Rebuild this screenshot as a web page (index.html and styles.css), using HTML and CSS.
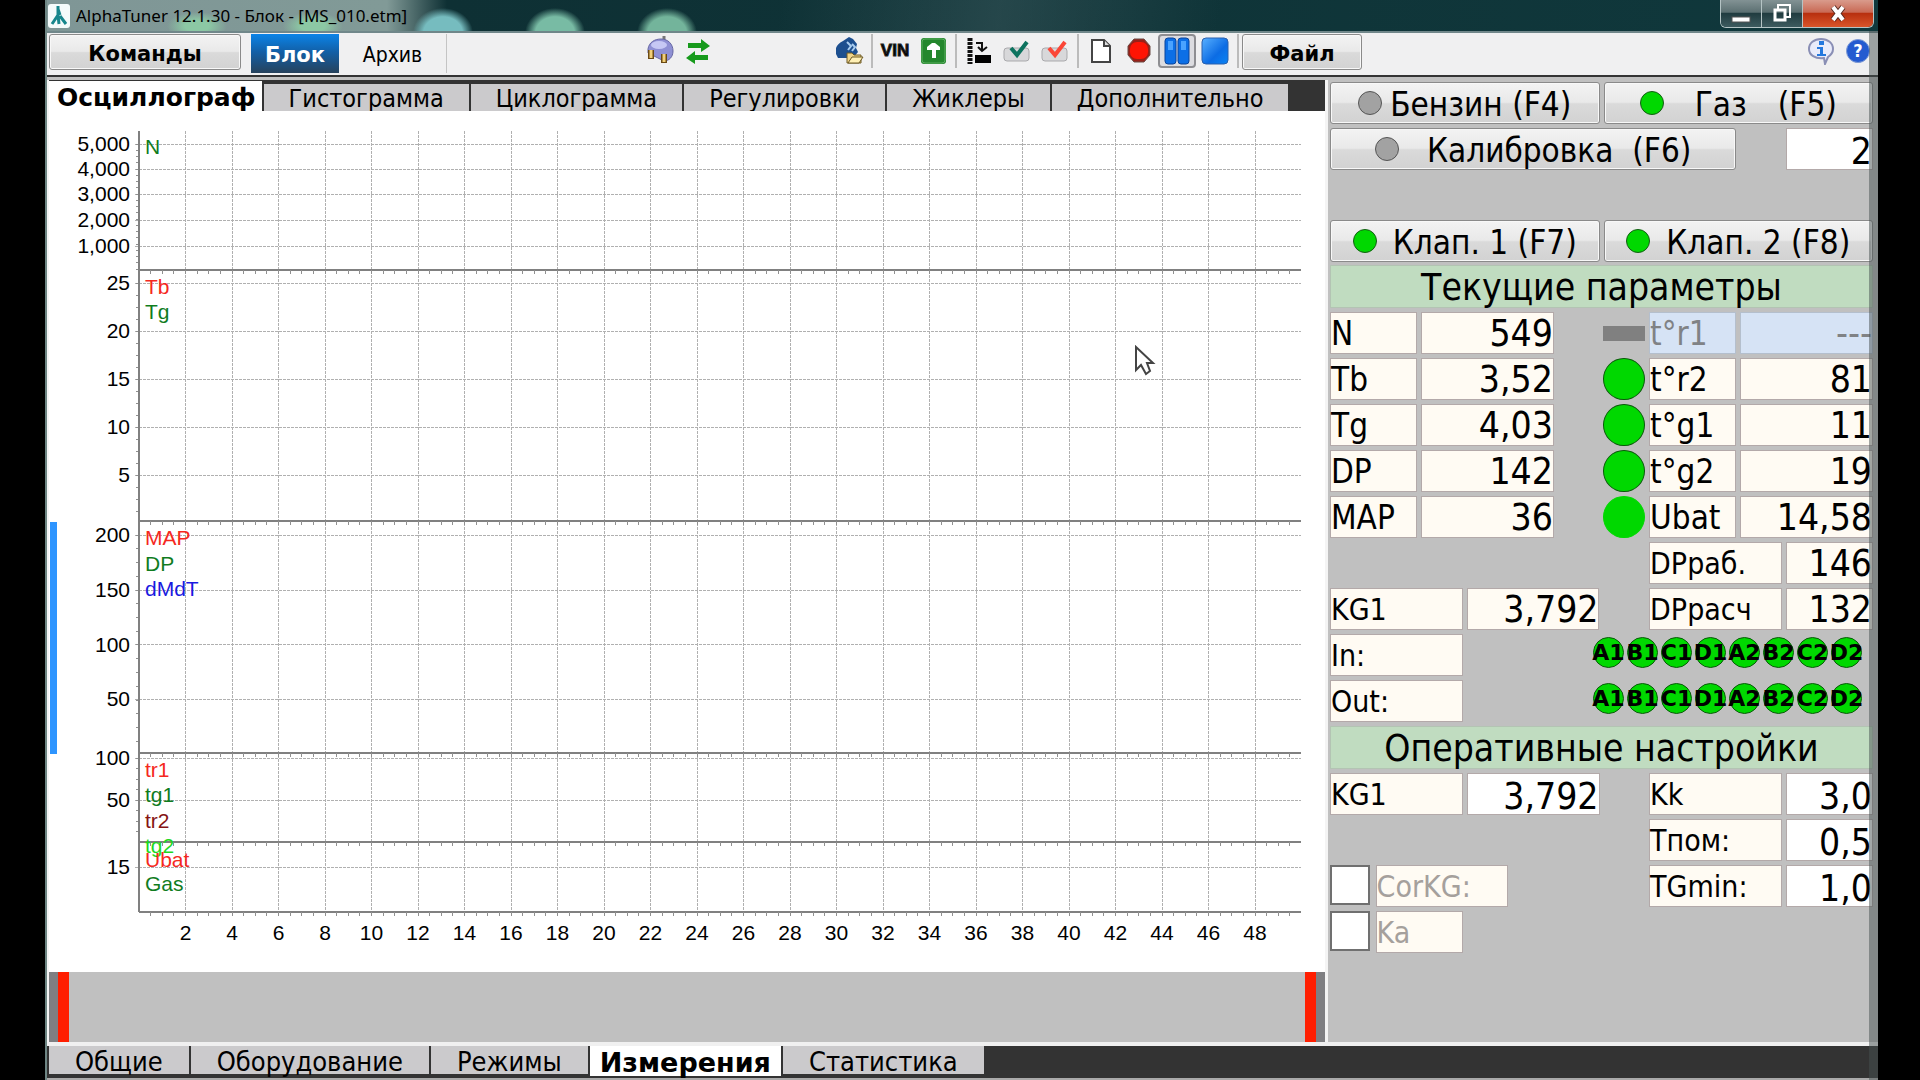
FILE: index.html
```html
<!DOCTYPE html>
<html lang="ru">
<head>
  <meta charset="UTF-8">
  <meta name="viewport" content="width=device-width, initial-scale=1">
  <title>AlphaTuner 12.1.30 - Блок - [MS_010.etm]</title>
  <link rel="stylesheet" href="styles.css">
</head>
<body>
  <div class="window">

    <header class="titlebar">
      <svg class="app-icon" width="22" height="24" viewBox="0 0 22 24">
        <rect width="22" height="24" rx="3" fill="#f4fbfb"/>
        <path d="M10 2v9l-6 9M10 5l2 6M10 11l1 9M12 12l6 8" fill="none" stroke="#16868c" stroke-width="3"/>
      </svg>
      <span class="title">AlphaTuner 12.1.30 - Блок - [MS_010.etm]</span>
      <div class="window-controls">
        <button class="minimize" aria-label="Свернуть">
          <svg width="20" height="22" viewBox="0 0 20 22"><rect x="1" y="14" width="18" height="5" fill="#fff" stroke="#555"/></svg>
        </button>
        <button class="restore" aria-label="Восстановить">
          <svg width="20" height="22" viewBox="0 0 20 22"><path d="M6 6V2h12v12h-4" fill="none" stroke="#fff" stroke-width="2"/><rect x="3" y="7" width="10" height="10" fill="none" stroke="#fff" stroke-width="3"/></svg>
        </button>
        <button class="close" aria-label="Закрыть">
          <svg width="18" height="18" viewBox="0 0 18 18"><path d="M4 2l10 13M14 2L4 15" stroke="#5a2a20" stroke-width="6"/><path d="M4 2l10 13M14 2L4 15" stroke="#fff" stroke-width="4"/></svg>
        </button>
      </div>
    </header>

    <nav class="toolbar">
      <button class="btn commands">Команды</button>
      <button class="mode active">Блок</button>
      <button class="mode">Архив</button>

      <div class="icons connection">
        <button aria-label="Подключение">
          <svg width="28" height="30" viewBox="0 0 28 30"><path d="M18 0v6" stroke="#777" stroke-width="3"/><path d="M2 13C3 6 9 3 15 3c7 0 12 5 12 12 0 6-4 10-9 10L2 17z" fill="#8f90d4" stroke="#6667a4"/><ellipse cx="13" cy="9" rx="8" ry="4" fill="#c6c8f4"/><path d="M5 14v9M18 18v9" stroke="#6b4a14" stroke-width="6"/><path d="M5 14v8M18 18v8" stroke="#f2cf78" stroke-width="3"/></svg>
        </button>
        <button aria-label="Обмен">
          <svg width="26" height="26" viewBox="0 0 26 26"><path d="M3 5h13V1l9 7-9 6v-4H3z" fill="#179a1c"/><path d="M23 17H10v-4l-9 7 9 6v-4h13z" fill="#179a1c"/></svg>
        </button>
      </div>

      <div class="icons">
        <button aria-label="Открыть профиль">
          <svg width="30" height="30" viewBox="0 0 30 30"><path d="M9 5L15 1l4 2 4 5-1 4 2 4-5 6H4l-2-4v-6c1-3 3-5 7-7z" fill="#1d4f8f"/><path d="M13 6l4 4-3 4M18 8l3 3-3 4" fill="none" stroke="#a9cdf0" stroke-width="2"/><path d="M13 27V17h5l2 2h7v8z" fill="#f0d58a" stroke="#6e5a25"/><path d="M14 27l4-6h11l-4 6z" fill="#fff0b5" stroke="#6e5a25"/></svg>
        </button>
        <span class="separator"></span>
        <button class="vin">VIN</button>
        <button aria-label="Запись в блок">
          <svg width="25" height="26" viewBox="0 0 25 26"><rect width="25" height="26" rx="3" fill="#24872d"/><rect x="1" y="1" width="23" height="24" rx="3" fill="none" stroke="#5cae61"/><path d="M6 9l5-4h3l5 4v3h-4v8h-4v-8H6z" fill="#fff"/></svg>
        </button>
        <span class="separator"></span>
        <button aria-label="Память">
          <svg width="24" height="26" viewBox="0 0 24 26"><path d="M3 0v26" stroke="#111" stroke-width="5" stroke-dasharray="3 1"/><path d="M9 5h6v7M11 9l4 4 5-4" fill="none" stroke="#111" stroke-width="2"/><rect x="8" y="17" width="16" height="8" fill="#000"/></svg>
        </button>
        <button aria-label="Проверить">
          <svg width="28" height="24" viewBox="0 0 28 24"><rect x="1" y="9" width="25" height="13" rx="3" fill="#d8d8da" stroke="#a9a9ac"/><path d="M8 9l6 7L24 3" fill="none" stroke="#0d735f" stroke-width="4"/></svg>
        </button>
        <button aria-label="Сбросить ошибки">
          <svg width="28" height="24" viewBox="0 0 28 24"><rect x="1" y="9" width="25" height="13" rx="3" fill="#d8d8da" stroke="#a9a9ac"/><path d="M8 9l6 7L24 3" fill="none" stroke="#fb4637" stroke-width="4"/></svg>
        </button>
        <span class="separator"></span>
        <button aria-label="Новый">
          <svg width="20" height="24" viewBox="0 0 20 24"><path d="M1 1h12l6 6v16H1z" fill="#fff" stroke="#444" stroke-width="2"/><path d="M13 1v6h6" fill="#ddd" stroke="#444" stroke-width="2"/></svg>
        </button>
        <button aria-label="Запись">
          <svg width="26" height="26" viewBox="0 0 26 26"><path d="M8 1h10l6 7v9l-6 7H8l-6-7V8z" fill="#9a2018" stroke="#6b4a44" stroke-width="1"/><rect x="4" y="4" width="18" height="17" rx="7" fill="#ff1404"/></svg>
        </button>
        <button class="pressed" aria-label="Пауза">
          <svg width="26" height="28" viewBox="0 0 26 28"><rect x="1" y="1" width="11" height="26" rx="3" fill="#0c6fe6" stroke="#0a459b"/><rect x="14" y="1" width="11" height="26" rx="3" fill="#0c6fe6" stroke="#0a459b"/><path d="M4 4h5v9H4zM17 4h5v9h-5z" fill="#4aa3ff"/></svg>
        </button>
        <button aria-label="Стоп">
          <svg width="28" height="28" viewBox="0 0 28 28">
            <defs><linearGradient id="stop-fill" x2="1" y2="1"><stop offset="0" stop-color="#58b0ff"/><stop offset="0.6" stop-color="#0c6ce4"/><stop offset="1" stop-color="#0a84f4"/></linearGradient></defs>
            <rect x="1" y="1" width="26" height="26" rx="4" fill="url(#stop-fill)" stroke="#2a60ad"/>
          </svg>
        </button>
        <span class="separator"></span>
      </div>
      <button class="btn file">Файл</button>

      <div class="help">
        <button aria-label="О программе">
          <svg width="26" height="27" viewBox="0 0 26 27"><path d="M13 1c7 0 12 4 12 10 0 4-2 6-5 8l-3 7-1-6C7 21 1 17 1 11S6 1 13 1z" fill="#e9ebfa" stroke="#8a8fb5" stroke-width="2"/><rect x="11" y="3" width="5" height="4" fill="#2478de"/><path d="M9 9h6v7h3v2H9v-2h3v-5H9z" fill="#2478de"/></svg>
        </button>
        <button class="question" aria-label="Справка">?</button>
      </div>
    </nav>

    <div class="workspace">
      <main class="scope">
        <nav class="tabs top-tabs">
          <button class="active">Осциллограф</button>
          <button>Гистограмма</button>
          <button>Циклограмма</button>
          <button>Регулировки</button>
          <button>Жиклеры</button>
          <button>Дополнительно</button>
        </nav>
        <div class="chart-area">
          <svg id="chart"></svg>
          <svg class="cursor" width="22" height="32" viewBox="0 0 22 32"><path d="M2 2v23l5-5 5 9 4-3-3-8h6z" fill="#fff" stroke="#444" stroke-width="2"/></svg>
        </div>
        <div class="timeline">
          <button class="handle" aria-label="Начало"></button>
          <button class="handle" aria-label="Конец"></button>
        </div>
      </main>

      <aside class="panel">
        <div class="grid">
          <button class="btn w6"><i class="lamp off"></i>Бензин (F4)</button>
          <button class="btn w6 wide-text"><i class="lamp"></i><span>Газ</span><span>(F5)</span></button>
        </div>
        <div class="grid">
          <button class="btn w9 spaced"><i class="lamp off"></i><span>Калибровка&nbsp; (F6)</span></button>
          <input class="field w2 last" aria-label="Калибровка" value="2">
        </div>
        <div class="grid valves">
          <button class="btn w6 even"><i class="lamp"></i>Клап. 1 (F7)</button>
          <button class="btn w6 even"><i class="lamp"></i>Клап. 2 (F8)</button>
        </div>

        <h2>Текущие параметры</h2>
        <div class="grid">
          <span class="name w2">N</span><output class="value w3">549</output>
          <i class="dash"></i><span class="name w2 disabled">t°r1</span><output class="value w3 disabled">---</output>

          <span class="name w2">Tb</span><output class="value w3">3,52</output>
          <i class="dot"></i><span class="name w2">t°r2</span><output class="value w3">81</output>

          <span class="name w2">Tg</span><output class="value w3">4,03</output>
          <i class="dot"></i><span class="name w2">t°g1</span><output class="value w3">11</output>

          <span class="name w2">DP</span><output class="value w3">142</output>
          <i class="dot"></i><span class="name w2">t°g2</span><output class="value w3">19</output>

          <span class="name w2">MAP</span><output class="value w3">36</output>
          <i class="dot plain"></i><span class="name w2">Ubat</span><output class="value w3">14,58</output>

          <span class="name w3 right">DPраб.</span><output class="value w2">146</output>

          <span class="name w3">KG1</span><output class="value w3">3,792</output>
          <span class="name w3 right">DPрасч</span><output class="value w2">132</output>

          <span class="name w3">In:</span>
          <div class="leds"><b>A1</b><b>B1</b><b>C1</b><b>D1</b><b>A2</b><b>B2</b><b>C2</b><b>D2</b></div>

          <span class="name w3">Out:</span>
          <div class="leds"><b>A1</b><b>B1</b><b>C1</b><b>D1</b><b>A2</b><b>B2</b><b>C2</b><b>D2</b></div>
        </div>

        <h2>Оперативные настройки</h2>
        <div class="grid">
          <label class="name w3" for="kg1">KG1</label><input class="field w3" id="kg1" value="3,792">
          <label class="name w3 right" for="kk">Kk</label><input class="field w2" id="kk" value="3,0">

          <label class="name w3 right" for="tpom">Tпом:</label><input class="field w2" id="tpom" value="0,5">

          <input type="checkbox" id="corkg"><label class="name w3 muted" for="corkg">CorKG:</label>
          <label class="name w3 right" for="tgmin">TGmin:</label><input class="field w2" id="tgmin" value="1,0">

          <input type="checkbox" id="ka"><label class="name w2 muted" for="ka">Ka</label>
        </div>
      </aside>
    </div>

    <nav class="tabs bottom-tabs">
      <button>Общие</button>
      <button>Оборудование</button>
      <button>Режимы</button>
      <button class="active">Измерения</button>
      <button>Статистика</button>
    </nav>

    <div class="frame-edge"></div>
  </div>

  <script>
    // Size of the plot in chart units, everything is placed as a share of it
    const W = 1162;
    const H = 781;
    const STEP = 93 / 2; // one labelled column, 2 seconds

    // top and bottom of each band, its gridlines, and its traces
    const bands = [
      { top: 0, bottom: 139, lines: [['5,000', 13], ['4,000', 38], ['3,000', 63], ['2,000', 89], ['1,000', 115]],
        traces: [['N', 'green', 23]] },
      { top: 139, bottom: 390, lines: [['25', 152], ['20', 200], ['15', 248], ['10', 296], ['5', 344]],
        traces: [['Tb', 'red', 163], ['Tg', 'green', 188]] },
      { top: 390, bottom: 622, lines: [['200', 404], ['150', 459], ['100', 514], ['50', 568]],
        traces: [['MAP', 'red', 414], ['DP', 'green', 440], ['dMdT', 'blue', 465]], selected: true },
      { top: 622, bottom: 711, lines: [['100', 627], ['50', 669]],
        traces: [['tr1', 'red', 646], ['tg1', 'green', 671], ['tr2', 'maroon', 697], ['tg2', 'lime', 722]] },
      { top: 711, bottom: 781, lines: [['15', 736]],
        traces: [['Ubat', 'red', 736], ['Gas', 'green', 760]] }
    ];

    const chart = document.getElementById('chart');

    const px = x => (x / W * 100) + '%';
    const py = y => (y / H * 100) + '%';

    function add(tag, attrs, text) {
      const el = document.createElementNS('http://www.w3.org/2000/svg', tag);
      for (const key in attrs) el.setAttribute(key, attrs[key]);
      if (text) el.textContent = text;
      chart.appendChild(el);
      return el;
    }

    function line(cls, x1, y1, x2, y2) {
      add('line', { class: cls, x1: px(x1), y1: py(y1), x2: px(x2), y2: py(y2) });
    }

    // Vertical gridlines and time labels
    for (let i = 1; i <= 24; i++) {
      const x = i * STEP;
      line('grid-line', x, 0, x, H + 4);
      add('text', { class: 'time', x: px(x), y: py(H), dy: 28 }, String(i * 2));
    }

    bands.forEach(band => {
      band.lines.forEach(([label, y]) => {
        line('grid-line', -4, y, W, y);
        add('text', { class: 'scale', x: 0, y: py(y), dx: -9, dy: 7 }, label);
      });

      // Small ticks on the left axis, four to a step
      if (band.lines.length > 1) {
        const gap = (band.lines[1][1] - band.lines[0][1]) / 4;
        for (let y = band.lines[0][1]; y < band.bottom; y += gap) line('tick', -3, y, 0, y);
      }

      // Bottom border with small ticks along it
      line('axis', 0, band.bottom, W, band.bottom);
      for (let x = STEP / 4; x < W; x += STEP / 4) line('tick', x, band.bottom, x, band.bottom + 4);

      if (band.selected) {
        add('rect', { class: 'selected', x: -89, y: py(band.top + 1), width: 7, height: py(band.bottom - band.top) });
      }
    });
    line('axis', 0, 0, 0, H);

    // Trace names go over the lines
    bands.forEach(band => {
      band.traces.forEach(([name, color, y]) => {
        add('text', { class: 'trace ' + color, x: 6, y: py(y) }, name);
      });
    });
  </script>
</body>
</html>
```
FILE: styles.css
```css
* {
  box-sizing: border-box;
}
body {
  margin: 0;
  background: #000;
  color: #000;
  font-family: "DejaVu Sans Condensed", "Noto Sans", sans-serif;
}
button, input {
  margin: 0;
  padding: 0;
  border: none;
  border-radius: 0;
  background: none;
  color: inherit;
  font-family: inherit;
}
.window {
  position: relative;
  display: flex;
  flex-direction: column;
  min-height: 100vh;
  margin: 0 42px 0 45px;
  border-left: 2px solid #6d8583;
  background: #c0c0c0;
}

/* Title bar */
.titlebar {
  display: flex;
  align-items: center;
  height: 33px;
  padding: 0 4px 0 1px;
  border-bottom: 2px solid #70878a;
  background:
    radial-gradient(closest-side, #8cc8a4 40%, transparent) 120px 12px / 60px 28px no-repeat,
    radial-gradient(closest-side, #8cc8a4 40%, transparent) 236px 12px / 60px 28px no-repeat,
    radial-gradient(closest-side, #76bcbf 65%, transparent) 366px 8px / 60px 50px no-repeat,
    radial-gradient(closest-side, #78bba4 65%, transparent) 478px 8px / 60px 50px no-repeat,
    radial-gradient(closest-side, #73b49b 65%, transparent) 590px 8px / 60px 50px no-repeat,
    linear-gradient(100deg, transparent 40%, rgba(60, 90, 94, 0.5) 52%, transparent 64%),
    linear-gradient(90deg, #7f9696 0, #819a97 340px, #0e3034 400px, #10383c 100%);
}
.app-icon {
  flex: none;
  margin-right: 6px;
}
.title {
  flex: 1;
  font-family: "Noto Sans", sans-serif;
  font-size: 17px;
  line-height: 24px;
}
.window-controls {
  display: flex;
  align-self: flex-start;
  height: 28px;
  border: 1px solid #b5c4c5;
  border-top: none;
  border-radius: 0 0 6px 6px;
  overflow: hidden;
}
.window-controls button {
  display: flex;
  align-items: center;
  justify-content: center;
  width: 41px;
  border-right: 1px solid #b5c4c5;
  background: linear-gradient(#829294 0, #5c7072 45%, #213c40 50%, #3d5b5f 100%);
}
.window-controls .close {
  width: 70px;
  border: none;
  background: linear-gradient(#d99b8c 0, #c96a55 45%, #b8300f 50%, #d9552a 100%);
}

/* Toolbar */
.toolbar {
  display: flex;
  align-items: stretch;
  height: 44px;
  padding: 1px 8px 2px 2px;
  border-bottom: 2px solid #333;
  background: #f0f0f1;
}
.btn {
  border: 1px solid #8a8a8a;
  border-radius: 3px;
  background: linear-gradient(#f3f3f3 0, #e9e9e9 48%, #dadada 52%, #d2d2d2 100%);
  box-shadow: inset 0 0 0 1px #f8f8f8;
}
.commands, .file {
  height: 36px;
  padding-top: 3px;
  font-family: "DejaVu Sans", sans-serif;
  font-size: 21px;
  font-weight: bold;
}
.commands {
  width: 192px;
  margin-right: 10px;
}
.file {
  width: 120px;
}
.mode {
  width: 108px;
  padding-top: 2px;
  border-right: 1px solid #c4c4c4;
  font-size: 21px;
}
.mode.active {
  width: 88px;
  border: none;
  background: linear-gradient(#0b84e8 0, #1260a8 45%, #26425c 100%);
  color: #fff;
  font-family: "DejaVu Sans", sans-serif;
  font-weight: bold;
}
.icons {
  display: flex;
  height: 34px;
}
.icons.connection {
  margin: 0 113px 0 194px;
}
.icons button {
  display: flex;
  align-items: center;
  justify-content: center;
  width: 38px;
}
.icons .pressed {
  border: 2px solid #8e8e92;
  border-radius: 4px;
  background: #dcdce0;
}
.icons .vin {
  font-family: "Liberation Sans", sans-serif;
  font-size: 17px;
  font-weight: bold;
  -webkit-text-stroke: 1px #222;
}
.separator {
  width: 2px;
  margin: 0 3px;
  background: #bbb;
}
.help {
  display: flex;
  gap: 12px;
  align-items: center;
  height: 34px;
  margin-left: auto;
}
.help button {
  display: flex;
}
.help .question {
  display: block;
  width: 24px;
  height: 24px;
  border: 1px solid #7f9bd6;
  border-radius: 50%;
  background: #245bd0;
  color: #fff;
  font-size: 18px;
  font-weight: bold;
  line-height: 20px;
}

/* Left and right parts */
.workspace {
  display: flex;
  flex: 1;
  padding-top: 3px;
}
.scope {
  display: flex;
  flex: 1;
  flex-direction: column;
  min-width: 0;
  padding: 0 3px 0 2px;
  background: #f4f4f4;
}

/* Tabs */
.tabs {
  display: flex;
  background: #333;
}
.tabs button {
  border-right: 2px solid #333;
  background: #cbcacc;
  white-space: nowrap;
}
.tabs .active {
  background: #fff;
  font-family: "DejaVu Sans", sans-serif;
  font-weight: bold;
}
.top-tabs {
  height: 31px;
  padding-top: 4px;
}
.top-tabs button {
  padding: 3px 25px 0;
  font-size: 25px;
  line-height: 24px;
}
.top-tabs .active {
  margin-top: -3px;
  padding: 3px 6px 0 8px;
}
.bottom-tabs {
  height: 38px;
  padding: 0 0 4px 2px;
  border-top: 4px solid #f0f0f0;
  border-bottom: 2px solid #aaa;
}
.bottom-tabs button {
  padding: 3px 26px 0;
  font-size: 27px;
  line-height: 26px;
}
.bottom-tabs .active {
  margin-bottom: -2px;
  padding: 3px 10px 0;
}

/* Chart */
.chart-area {
  position: relative;
  display: flex;
  flex: 1;
  padding: 20px 24px 60px 90px;
  background: #fff;
}
#chart {
  flex: 1;
  min-width: 0;
  overflow: visible;
  font-family: "Liberation Sans", sans-serif;
  font-size: 21px;
}
#chart line {
  shape-rendering: crispEdges;
}
.grid-line {
  stroke: #b0b0b0;
  stroke-dasharray: 3 1;
}
.axis {
  stroke: #808080;
  stroke-width: 2px;
}
.tick {
  stroke: #909090;
}
.selected {
  fill: #2e95ff;
}
.time {
  text-anchor: middle;
}
.scale {
  text-anchor: end;
}
.red { fill: #f5281e; }
.green { fill: #107c1e; }
.blue { fill: #1a1ae0; }
.maroon { fill: #851414; }
.lime { fill: #1ed81e; }
.cursor {
  position: absolute;
  top: 234px;
  left: 85%;
}
.timeline {
  display: flex;
  justify-content: space-between;
  height: 70px;
  padding: 0 9px;
  background: linear-gradient(90deg, #7f7f82 9px, #c0c0c0 9px, #c0c0c0 calc(100% - 9px), #7f7f82 calc(100% - 9px));
}
.handle {
  width: 11px;
  background: #ff1e00;
}

/* Right panel */
.panel {
  display: flex;
  flex: none;
  flex-direction: column;
  width: 550px;
  padding: 2px 5px 0 2px;
}
.grid {
  display: grid;
  grid-template-columns: repeat(12, 1fr);
  grid-auto-rows: 42px;
  gap: 4px;
  margin-bottom: 4px;
}
.valves {
  margin: 46px 0 3px;
}
.w2 { grid-column-end: span 2; }
.w3 { grid-column-end: span 3; }
.w6 { grid-column-end: span 6; }
.w9 { grid-column-end: span 9; }
.right { grid-column-start: 8; }
.last { grid-column-start: 11; }
.panel .btn {
  display: flex;
  align-items: center;
  justify-content: center;
  gap: 8px;
  padding-top: 4px;
  font-size: 33px;
  line-height: 36px;
}
.panel .wide-text {
  gap: 31px;
}
.panel .spaced {
  gap: 28px;
}
.panel .even {
  gap: 16px;
}
.lamp {
  width: 24px;
  height: 24px;
  margin-bottom: 5px;
  border: 1px solid #155c15;
  border-radius: 50%;
  background: #00d800;
}
.lamp.off {
  border-color: #555;
  background: #a2a2a2;
}
h2 {
  height: 43px;
  margin: 0 0 4px;
  border: 1px solid #b3c4b3;
  background: #c0dcc0;
  font-size: 37px;
  font-weight: normal;
  line-height: 44px;
  text-align: center;
}
.name, .value, .field {
  min-width: 0;
  border: 1px solid #b3a9a9;
  background: #fffbf3;
  line-height: 41px;
  white-space: nowrap;
}
.name {
  font-size: 30px;
}
.name.w2 {
  font-size: 33px;
}
.value, .field {
  font-size: 37px;
  text-align: right;
}
.field {
  width: 100%;
  padding-top: 4px;
  background: #fff;
}
.disabled {
  border-color: #b4bfcd;
  background: #d6e3f5;
  color: #808285;
}
.name.muted {
  color: #a5a09c;
  font-size: 30px;
}
.dot, .dash {
  grid-column-start: 7;
}
.dot {
  border: 1px solid #0a5a0a;
  border-radius: 50%;
  background: #00d800;
}
.dot.plain {
  border-color: #00d800;
}
.dash {
  align-self: center;
  height: 15px;
  background: #808080;
}
.leds {
  display: flex;
  grid-column: 6 / 13;
  gap: 3px;
  justify-content: flex-end;
  padding: 3px 11px 0 0;
}
.leds b {
  display: flex;
  justify-content: center;
  width: 31px;
  height: 31px;
  border: 1px solid #0a5a0a;
  border-radius: 50%;
  background: #00d800;
  font-family: "DejaVu Sans", sans-serif;
  font-size: 22px;
  line-height: 29px;
}
input[type="checkbox"] {
  width: 40px;
  height: 40px;
  border: 2px solid #707070;
  background: #fff;
  appearance: none;
}
input[type="checkbox"]:checked {
  background: #00d800;
}

/* Translucent glass frame over the right side */
.frame-edge {
  position: absolute;
  top: 31px;
  right: 0;
  bottom: 0;
  width: 9px;
  background: rgba(70, 80, 80, 0.5);
  pointer-events: none;
}
```
